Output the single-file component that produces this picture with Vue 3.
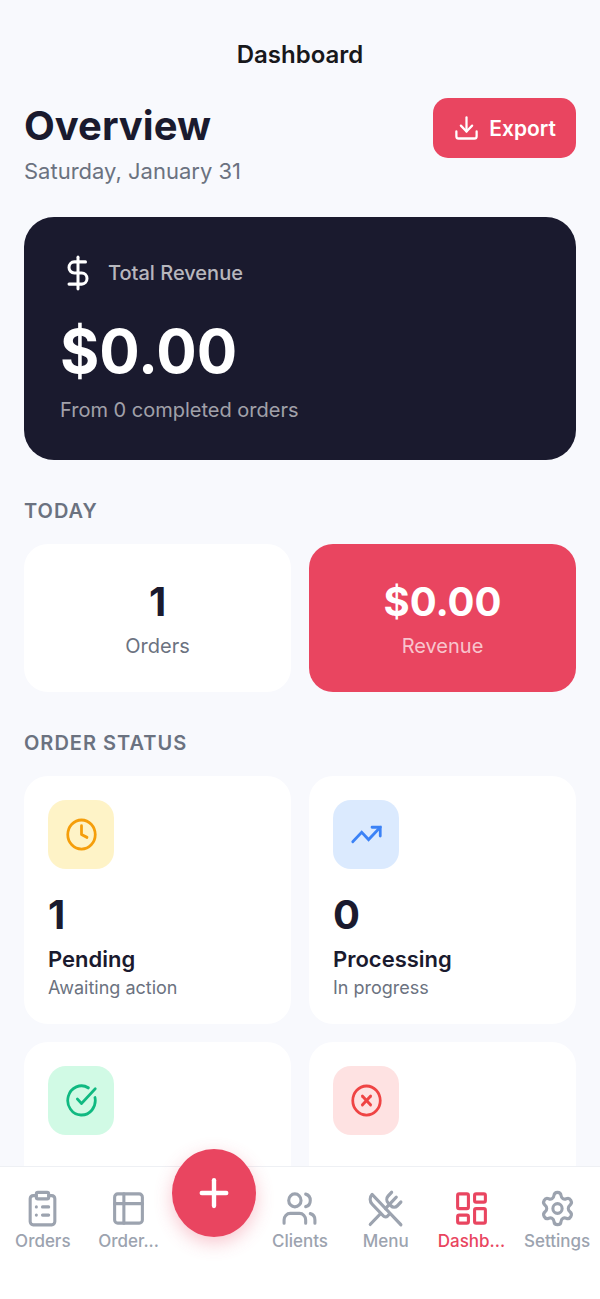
<template>
  <div class="screen">
    <header class="topbar">Dashboard</header>

    <main class="content">
      <!-- heading -->
      <div class="heading">
        <div>
          <h1>Overview</h1>
          <p class="date">Saturday, January 31</p>
        </div>
        <button class="export" type="button">
          <svg class="icon icon-sm" viewBox="0 0 24 24" preserveAspectRatio="none">
            <path v-for="d in icons.download" :key="d" :d="d" />
          </svg>
          Export
        </button>
      </div>

      <!-- total revenue -->
      <section class="total">
        <div class="total-head">
          <svg class="icon icon-lg" viewBox="0 0 24 24" preserveAspectRatio="none">
            <path v-for="d in icons.dollar" :key="d" :d="d" />
          </svg>
          <span>Total Revenue</span>
        </div>
        <p class="total-value">$0.00</p>
        <p class="total-note">From 0 completed orders</p>
      </section>

      <!-- today -->
      <h2>TODAY</h2>
      <div class="grid">
        <div class="card today">
          <p class="value">1</p>
          <p class="caption">Orders</p>
        </div>
        <div class="card today accent">
          <p class="value">$0.00</p>
          <p class="caption">Revenue</p>
        </div>
      </div>

      <!-- order status -->
      <h2>ORDER STATUS</h2>
      <div class="grid">
        <div v-for="item in statuses" :key="item.icon" class="card status">
          <div class="badge" :class="item.icon">
            <svg class="icon icon-md" viewBox="0 0 24 24" preserveAspectRatio="none">
              <path v-for="d in icons[item.icon]" :key="d" :d="d" />
            </svg>
          </div>
          <template v-if="item.label">
            <p class="value">{{ item.count }}</p>
            <p class="label">{{ item.label }}</p>
            <p class="hint">{{ item.hint }}</p>
          </template>
        </div>
      </div>
    </main>

    <!-- tab bar -->
    <nav class="tabs">
      <template v-for="tab in tabs" :key="tab.icon">
        <button v-if="tab.icon === 'plus'" class="add" type="button" aria-label="Add">
          <svg class="icon icon-xl" viewBox="0 0 24 24" preserveAspectRatio="none">
            <path v-for="d in icons.plus" :key="d" :d="d" />
          </svg>
        </button>
        <a
          v-else
          href="#"
          class="tab"
          :class="{ active: active === tab.icon }"
          @click.prevent="active = tab.icon"
        >
          <svg class="icon icon-lg" viewBox="0 0 24 24" preserveAspectRatio="none">
            <path v-for="d in icons[tab.icon]" :key="d" :d="d" />
          </svg>
          <span>{{ tab.label }}</span>
        </a>
      </template>
    </nav>
  </div>
</template>

<script setup>
import { ref } from "vue";

const active = ref("dashboard");

const statuses = [
  { icon: "clock", count: 1, label: "Pending", hint: "Awaiting action" },
  { icon: "trend", count: 0, label: "Processing", hint: "In progress" },
  { icon: "check" },
  { icon: "cross" },
];

const tabs = [
  { icon: "clipboard", label: "Orders" },
  { icon: "table", label: "Order..." },
  { icon: "plus" },
  { icon: "users", label: "Clients" },
  { icon: "utensils", label: "Menu" },
  { icon: "dashboard", label: "Dashb..." },
  { icon: "settings", label: "Settings" },
];

const icons = {
  download: ["M12 15V3", "M21 15v4a2 2 0 0 1-2 2H5a2 2 0 0 1-2-2v-4", "m7 10 5 5 5-5"],
  dollar: ["M12 2v20", "M17 5H9.5a3.5 3.5 0 0 0 0 7h5a3.5 3.5 0 0 1 0 7H6"],
  clock: ["M2 12a10 10 0 1 0 20 0a10 10 0 1 0-20 0", "M12 6v6l4 2"],
  trend: ["M16 7h6v6", "m22 7-8.5 8.5-5-5L2 17"],
  check: ["M21.801 10A10 10 0 1 1 17 3.335", "m9 11 3 3L22 4"],
  cross: ["M2 12a10 10 0 1 0 20 0a10 10 0 1 0-20 0", "m15 9-6 6", "m9 9 6 6"],
  plus: ["M5 12h14", "M12 5v14"],
  clipboard: [
    "M9 2h6a1 1 0 0 1 1 1v2a1 1 0 0 1-1 1H9a1 1 0 0 1-1-1V3a1 1 0 0 1 1-1z",
    "M16 4h2a2 2 0 0 1 2 2v14a2 2 0 0 1-2 2H6a2 2 0 0 1-2-2V6a2 2 0 0 1 2-2h2",
    "M12 11h4",
    "M12 16h4",
    "M8 11h.01",
    "M8 16h.01",
  ],
  table: ["M5 3h14a2 2 0 0 1 2 2v14a2 2 0 0 1-2 2H5a2 2 0 0 1-2-2V5a2 2 0 0 1 2-2z", "M3 9h18", "M9 3v18"],
  users: [
    "M16 21v-2a4 4 0 0 0-4-4H6a4 4 0 0 0-4 4v2",
    "M16 3.128a4 4 0 0 1 0 7.744",
    "M22 21v-2a4 4 0 0 0-3-3.87",
    "M5 7a4 4 0 1 0 8 0a4 4 0 1 0-8 0",
  ],
  utensils: [
    "m16 2-2.3 2.3a3 3 0 0 0 0 4.2l1.8 1.8a3 3 0 0 0 4.2 0L22 8",
    "M15 15 3.3 3.3a4.2 4.2 0 0 0 0 6l7.3 7.3c.7.7 2 .7 2.8 0L15 15Zm0 0 7 7",
    "m2.1 21.8 6.4-6.3",
    "m19 5-7 7",
  ],
  dashboard: [
    "M4 3h5a1 1 0 0 1 1 1v7a1 1 0 0 1-1 1H4a1 1 0 0 1-1-1V4a1 1 0 0 1 1-1z",
    "M15 3h5a1 1 0 0 1 1 1v3a1 1 0 0 1-1 1h-5a1 1 0 0 1-1-1V4a1 1 0 0 1 1-1z",
    "M15 12h5a1 1 0 0 1 1 1v7a1 1 0 0 1-1 1h-5a1 1 0 0 1-1-1v-7a1 1 0 0 1 1-1z",
    "M4 16h5a1 1 0 0 1 1 1v3a1 1 0 0 1-1 1H4a1 1 0 0 1-1-1v-3a1 1 0 0 1 1-1z",
  ],
  settings: [
    "M9.671 4.136a2.34 2.34 0 0 1 4.659 0 2.34 2.34 0 0 0 3.319 1.915 2.34 2.34 0 0 1 2.33 4.033 2.34 2.34 0 0 0 0 3.831 2.34 2.34 0 0 1-2.33 4.033 2.34 2.34 0 0 0-3.319 1.915 2.34 2.34 0 0 1-4.659 0 2.34 2.34 0 0 0-3.32-1.915 2.34 2.34 0 0 1-2.33-4.033 2.34 2.34 0 0 0 0-3.831A2.34 2.34 0 0 1 6.35 6.051a2.34 2.34 0 0 0 3.319-1.915",
    "M9 12a3 3 0 1 0 6 0a3 3 0 1 0-6 0",
  ],
};
</script>

<style>
body {
  margin: 0;
  background-color: #f8f9fd;
}
</style>

<style scoped>
.screen {
  display: flex;
  flex-direction: column;
  height: 100vh;
  background-color: #f8f9fd;
  color: #1a1a2e;
  font-family: Inter, "Liberation Sans", sans-serif;
}
h1,
h2,
p {
  margin: 0;
}
.icon {
  flex: none;
  fill: none;
  stroke: currentColor;
  stroke-width: 2;
  stroke-linecap: round;
  stroke-linejoin: round;
}
.icon-sm {
  width: 27px;
  height: 28px;
}
.icon-md {
  width: 33px;
  height: 35px;
}
.icon-lg {
  width: 37px;
  height: 39px;
}
.icon-xl {
  width: 42px;
  height: 44px;
  stroke-width: 2.5;
}
.total .icon {
  width: 36px;
  height: 38px;
}
.trend .icon {
  stroke-linejoin: miter;
}
.topbar {
  flex: none;
  padding: 40px 24px 28px;
  color: #18181b;
  font-size: 24px;
  font-weight: 600;
  line-height: 30px;
  text-align: center;
}
.content {
  flex: 1;
  min-height: 0;
  padding: 0 24px;
  overflow-y: auto;
  scrollbar-width: none;
}
.heading {
  display: flex;
  align-items: flex-start;
  justify-content: space-between;
  margin-bottom: 28px;
}
h1 {
  font-size: 40px;
  font-weight: 700;
  line-height: 56px;
}
.date {
  color: #6b7280;
  font-size: 22px;
  line-height: 35px;
}
.export {
  display: flex;
  align-items: center;
  gap: 9px;
  height: 60px;
  padding: 0 20px;
  border: 0;
  border-radius: 15px;
  background-color: #e94560;
  color: #fff;
  font: 600 21px Inter, sans-serif;
  cursor: pointer;
}
.total {
  margin-bottom: 36px;
  padding: 36px;
  border-radius: 30px;
  background-color: #1a1a2e;
}
.total-head {
  display: flex;
  align-items: center;
  gap: 12px;
  color: #fff;
  font-size: 20px;
  font-weight: 500;
  line-height: 40px;
}
.total-head span {
  color: rgba(255, 255, 255, 0.7);
}
.total-value {
  color: #fff;
  font-size: 60px;
  font-weight: 700;
  line-height: 76px;
  margin: 20px 0 8px;
}
.total-note {
  color: rgba(255, 255, 255, 0.6);
  font-size: 20px;
  line-height: 27px;
}
h2 {
  margin-bottom: 18px;
  color: #6b7280;
  font-size: 20px;
  font-weight: 600;
  line-height: 30px;
  letter-spacing: 1px;
}
.grid {
  display: grid;
  grid-template-columns: 1fr 1fr;
  gap: 18px;
  margin-bottom: 36px;
}
.card {
  border-radius: 24px;
  background-color: #fff;
}
.value {
  font-size: 40px;
  font-weight: 700;
  line-height: 56px;
}
.today {
  padding: 30px 24px;
  text-align: center;
}
.caption {
  color: #6b7280;
  font-size: 20px;
  line-height: 32px;
}
.accent {
  background-color: #e94560;
  color: #fff;
}
.accent .caption {
  color: rgba(255, 255, 255, 0.7);
}
.status {
  min-height: 248px;
  padding: 24px;
  box-sizing: border-box;
}
.badge {
  display: flex;
  align-items: center;
  justify-content: center;
  width: 66px;
  height: 69px;
  margin-bottom: 18px;
  border-radius: 18px;
}
.clock {
  background-color: #fef3c7;
  color: #f59e0b;
}
.trend {
  background-color: #dbeafe;
  color: #3b82f6;
}
.check {
  background-color: #d1fae5;
  color: #10b981;
}
.cross {
  background-color: #fee2e2;
  color: #ef4444;
}
.label {
  font-size: 22px;
  font-weight: 600;
  line-height: 32px;
}
.hint {
  color: #6b7280;
  font-size: 18px;
  line-height: 25px;
}
.tabs {
  display: grid;
  grid-template-columns: repeat(7, 1fr);
  flex: none;
  height: 132px;
  border-top: 1px solid #eef0f4;
  background-color: #fff;
}
.tab {
  display: flex;
  flex-direction: column;
  align-items: center;
  padding-top: 22px;
  color: #9ca3af;
  font-size: 17px;
  font-weight: 500;
  line-height: 26px;
  text-decoration: none;
}
.tab.active {
  color: #e94560;
}
.add {
  display: flex;
  align-items: center;
  justify-content: center;
  justify-self: center;
  width: 84px;
  height: 88px;
  margin-top: -18px;
  padding: 0;
  border: 0;
  border-radius: 50%;
  background-color: #e94560;
  box-shadow: 0 6px 18px rgba(233, 69, 96, 0.3);
  color: #fff;
  cursor: pointer;
}
</style>
